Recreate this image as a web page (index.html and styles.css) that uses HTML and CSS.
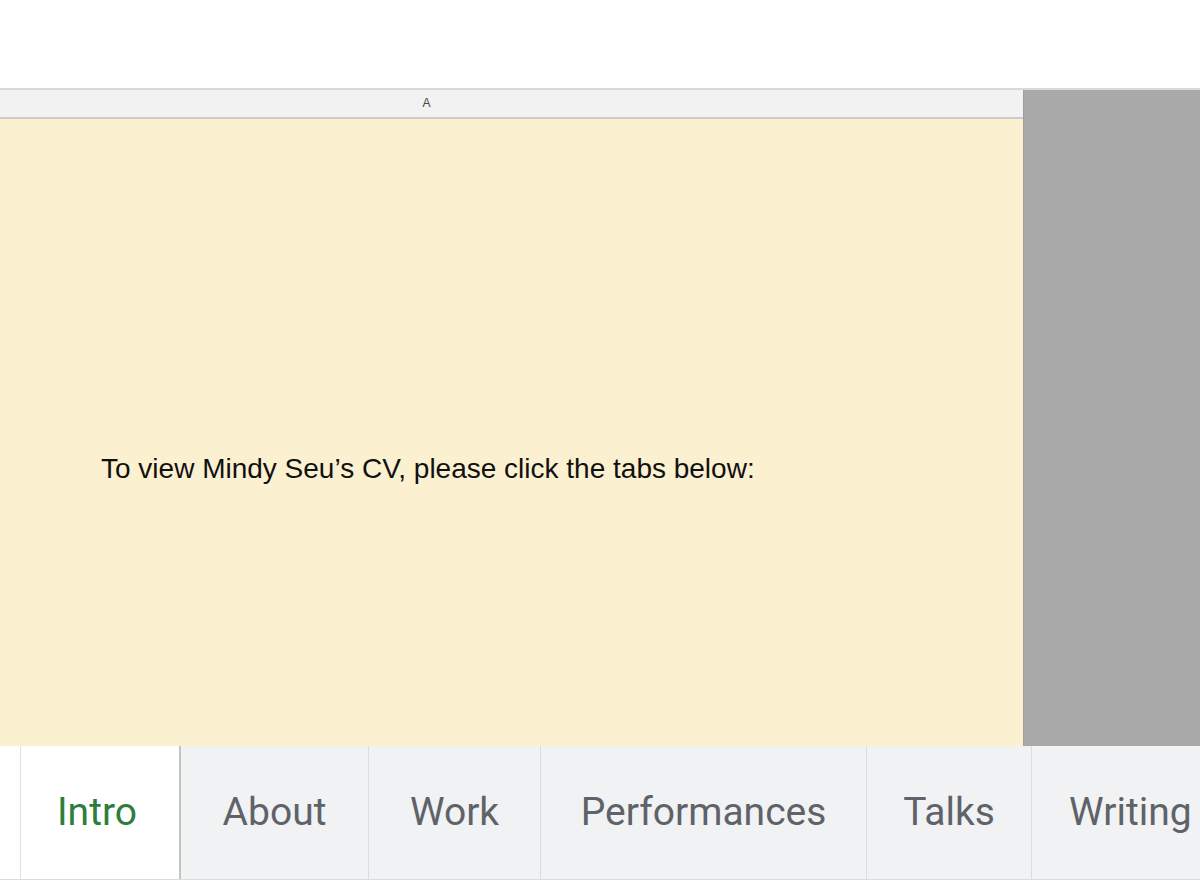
FILE: index.html
```html
<!DOCTYPE html>
<html lang="en">
<head>
    <meta charset="UTF-8">
    <title>Mindy Seu CV</title>
    <link rel="stylesheet" href="styles.css">
</head>
<body>
    <div class="toolbar-space"></div>
    <div class="grid-area">
        <div class="sheet">
            <div class="col-header">
                <div class="col-a">A</div>
            </div>
            <div class="cell">
                <p class="cell-text">To view Mindy Seu’s CV, please click the tabs below:</p>
            </div>
        </div>
        <div class="outside"></div>
    </div>
    <div class="tabs">
        <div class="tab-gap"></div>
        <div class="tab active">Intro</div>
        <div class="tab w-about">About</div>
        <div class="tab w-work">Work</div>
        <div class="tab w-perf">Performances</div>
        <div class="tab w-talks">Talks</div>
        <div class="tab w-writing">Writing</div>
    </div>
</body>
</html>
```

FILE: styles.css
```css
body {
    margin: 0;
    background: #fff;
    font-family: "Liberation Sans", Arial, sans-serif;
    overflow: hidden;
    width: 1200px;
    height: 891px;
}
.toolbar-space {
    height: 88px;
}
.grid-area {
    display: flex;
    height: 656px;
    border-top: 2px solid #d9d9d9;
}
.sheet {
    width: 1023px;
    display: flex;
    flex-direction: column;
}
.col-header {
    display: flex;
    height: 27px;
    background: #f2f2f2;
    border-bottom: 2px solid #cfc8cf;
}
.col-a {
    width: 853px;
    font-size: 12px;
    color: #444;
    text-align: center;
    line-height: 27px;
}
.cell {
    flex: 1;
    background: #fbf0d0;
    display: flex;
    align-items: center;
}
.cell-text {
    margin: 0 0 0 101px;
    padding-top: 72px;
    font-size: 28px;
    color: #111;
}
.outside {
    flex: 1;
    background: #a9a9a9;
    border-left: 1px solid #9e9e9e;
}
.tabs {
    display: flex;
    height: 133px;
    border-bottom: 1px solid #dadce0;
    font-family: Roboto, "Open Sans", sans-serif;
    font-size: 39px;
    color: #5f6368;
}
.tab-gap {
    flex-shrink: 0;
    width: 20px;
    background: #fff;
    border-right: 1px solid #e0e0e0;
}
.tab {
    flex-shrink: 0;
    display: flex;
    align-items: center;
    justify-content: center;
    background: #f1f2f4;
    border-right: 1px solid #dadce0;
    padding-bottom: 2px;
    box-sizing: border-box;
}
.tab.active {
    width: 160px;
    background: #fff;
    color: #2e7d3c;
    border-right: 2px solid #c4c4c4;
    padding-right: 6px;
}
.w-about { width: 188px; }
.w-work { width: 172px; }
.w-perf { width: 326px; }
.w-talks { width: 165px; }
.w-writing {
    width: 200px;
    justify-content: flex-start;
    padding-left: 37px;
    border-right: none;
}
```
